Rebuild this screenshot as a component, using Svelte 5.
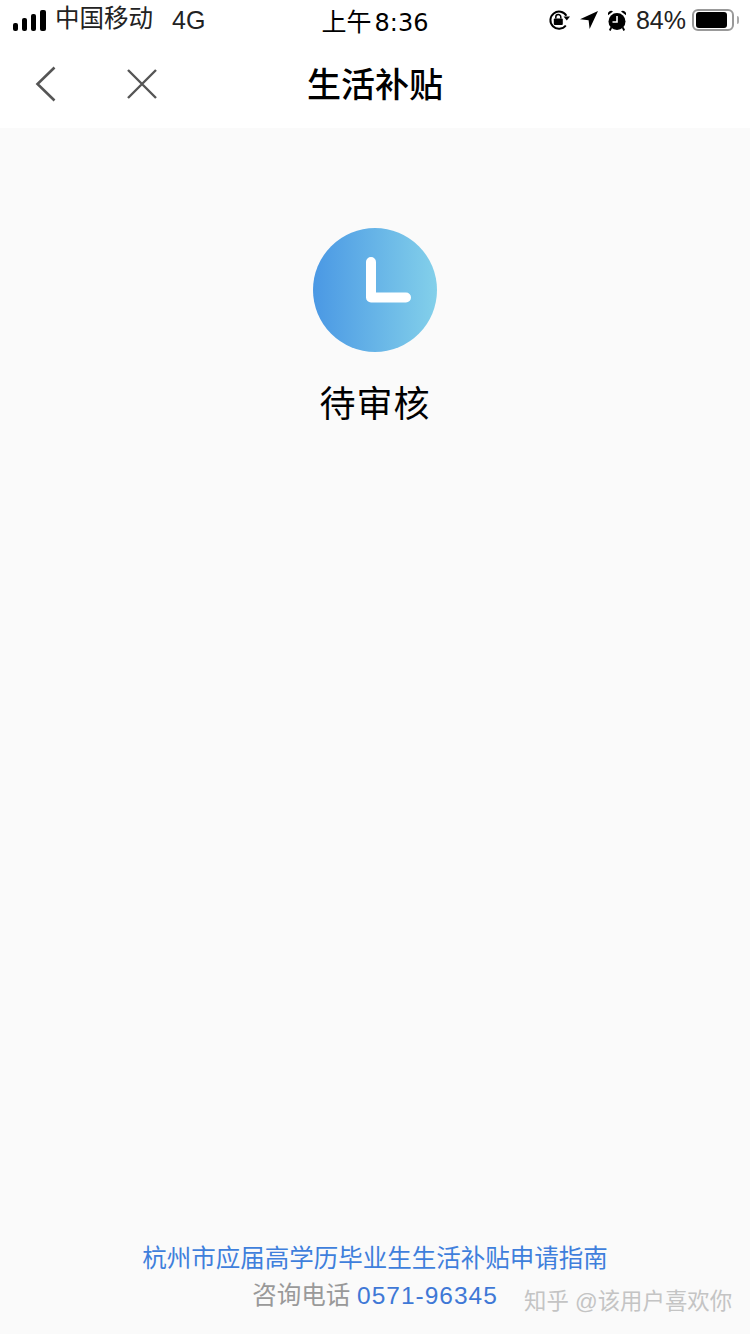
<script>
  // pantalla de estado: solicitud pendiente
  const signal = [
    { w: 5, h: 8 },
    { w: 5, h: 13 },
    { w: 5, h: 17 },
    { w: 6, h: 21 },
  ];
</script>

<div class="screen">
  <div class="status">
    <div class="left">
      <div class="bars">
        {#each signal as b}
          <span style={`width:${b.w}px;height:${b.h}px`}></span>
        {/each}
      </div>
      <span class="carrier">中国移动</span>
      <span class="net">4G</span>
    </div>
    <div class="clock"><span class="ampm">上午</span><span class="time">8:36</span></div>
    <div class="right">
      <svg class="ic" width="22" height="22" viewBox="0 0 22 22">
        <path d="M17.800 16.500A8.600 8.600 0 1 1 18.400 6.800" fill="none" stroke="#000" stroke-width="2" />
        <path d="M15.500 7.500h6.500l-3.200 4z" fill="#000" />
        <rect x="5.800" y="9.500" width="9" height="6.500" rx="1" fill="#000" />
        <path d="M7.800 9.500V8a2.500 2.500 0 0 1 5 0v1.500" fill="none" stroke="#000" stroke-width="1.500" />
      </svg>
      <svg class="ic" width="18" height="18" viewBox="0 0 18 18">
        <path d="M18 0 0 8.300l8.600 1 1 8.700z" fill="#000" />
      </svg>
      <svg class="ic" width="18" height="21" viewBox="0 0 18 21">
        <circle cx="9" cy="11.500" r="8.500" fill="#000" />
        <path d="M0 5.200a3.300 3.300 0 0 1 5-3.700zM18 5.200a3.300 3.300 0 0 0-5-3.700z" fill="#000" />
        <path d="M3.200 17.500 1.800 20.500M14.800 17.500 16.200 20.500" stroke="#000" stroke-width="1.800" fill="none" />
        <path d="M9 6v6H4.500" stroke="#fff" stroke-width="1.600" fill="none" />
      </svg>
      <span class="pct">84%</span>
      <div class="battery">
        <div class="level"></div>
      </div>
      <div class="nub"></div>
    </div>
  </div>

  <header class="nav">
    <svg class="back" width="22" height="36" viewBox="0 0 22 36">
      <path d="M19.500 1.500 2.500 18l17 16.500" fill="none" stroke="#555" stroke-width="2.600" />
    </svg>
    <svg class="close" width="32" height="32" viewBox="0 0 32 32">
      <path d="M2 2 30 30M30 2 2 30" fill="none" stroke="#555" stroke-width="2.400" />
    </svg>
    <h1>生活补贴</h1>
  </header>

  <main>
    <div class="badge">
      <svg width="124" height="124" viewBox="0 0 124 124">
        <defs>
          <linearGradient id="g" x1="0" x2="1" y1="0" y2="0">
            <stop offset="0" stop-color="#4a98e4" />
            <stop offset="1" stop-color="#83d0ea" />
          </linearGradient>
        </defs>
        <circle cx="62" cy="62" r="62" fill="url(#g)" />
        <path d="M58 34V69.500H93" fill="none" stroke="#fff" stroke-width="10" stroke-linecap="round" stroke-linejoin="round" />
      </svg>
    </div>
    <p class="state">待审核</p>
  </main>

  <footer>
    <div class="guide">杭州市应届高学历毕业生生活补贴申请指南</div>
    <div class="contact">咨询电话 <span class="tel">0571-96345</span></div>
    <div class="mark">知乎 @该用户喜欢你</div>
  </footer>
</div>

<style>
  :global(body) {
    margin: 0;
    background: #fafafa;
  }

  .screen {
    position: relative;
    width: 750px;
    height: 1334px;
    display: flex;
    flex-direction: column;
    background: #fafafa;
    font-family: "Liberation Sans", "Noto Sans CJK SC", sans-serif;
    overflow: hidden;
  }

  .status {
    height: 40px;
    background: #fff;
    display: grid;
    grid-template-columns: 1fr auto 1fr;
    align-items: center;
    color: #000;
  }

  .left {
    display: flex;
    align-items: center;
    padding-left: 13px;
    font-size: 24px;
    line-height: 40px;
  }

  .bars {
    display: flex;
    align-items: flex-end;
    gap: 4px;
    margin-right: 9px;
  }

  .bars span {
    background: #000;
    border-radius: 2px;
  }

  .carrier {
    font-size: 24.500px;
    color: #222;
    position: relative;
    top: -1px;
  }

  .net {
    margin-left: 19px;
    font-size: 25px;
    color: #222;
  }

  .clock {
    font-size: 25px;
    color: #000;
  }

  .time {
    margin-left: 3px;
    font-family: "DejaVu Sans", sans-serif;
    font-size: 24px;
    font-weight: 500;
  }

  .right {
    display: flex;
    align-items: center;
    justify-content: flex-end;
    padding-right: 11px;
  }

  .ic {
    flex: none;
    margin-right: 10px;
  }

  .pct {
    font-size: 25px;
    color: #222;
    margin-right: 6px;
  }

  .battery {
    box-sizing: border-box;
    width: 42px;
    height: 22px;
    padding: 1px 2px;
    border: 2px solid #999;
    border-radius: 6px;
  }

  .level {
    width: 31px;
    height: 16px;
    background: #000;
    border-radius: 3px;
  }

  .nub {
    width: 2px;
    height: 8px;
    margin-left: 3px;
    background: #aaa;
    border-radius: 0 2px 2px 0;
  }

  .nav {
    position: relative;
    height: 88px;
    background: #fff;
    display: flex;
    align-items: center;
    justify-content: center;
  }

  .back {
    position: absolute;
    left: 35px;
    top: 26px;
  }

  .close {
    position: absolute;
    left: 126px;
    top: 28px;
  }

  h1 {
    margin: 0 0 4px;
    font-size: 34px;
    font-weight: 500;
    color: #000;
  }

  main {
    flex: 1;
    display: flex;
    flex-direction: column;
    align-items: center;
    padding-top: 100px;
  }

  .badge {
    width: 124px;
    height: 124px;
  }

  .badge svg {
    display: block;
  }

  .state {
    margin: 30px 0 0;
    font-size: 36px;
    line-height: 46px;
    letter-spacing: 1px;
    color: #000;
  }

  footer {
    padding-bottom: 21px;
    text-align: center;
  }

  .guide {
    font-size: 24.500px;
    line-height: 32px;
    color: #3f7fdc;
  }

  .contact {
    margin-top: 4px;
    font-size: 24.500px;
    line-height: 34px;
    color: #999;
  }

  .tel {
    color: #3f78d6;
    letter-spacing: 1px;
  }

  .mark {
    position: absolute;
    left: 524px;
    top: 1285px;
    font-size: 22.400px;
    line-height: 34px;
    color: #c4c4c4;
  }
</style>
